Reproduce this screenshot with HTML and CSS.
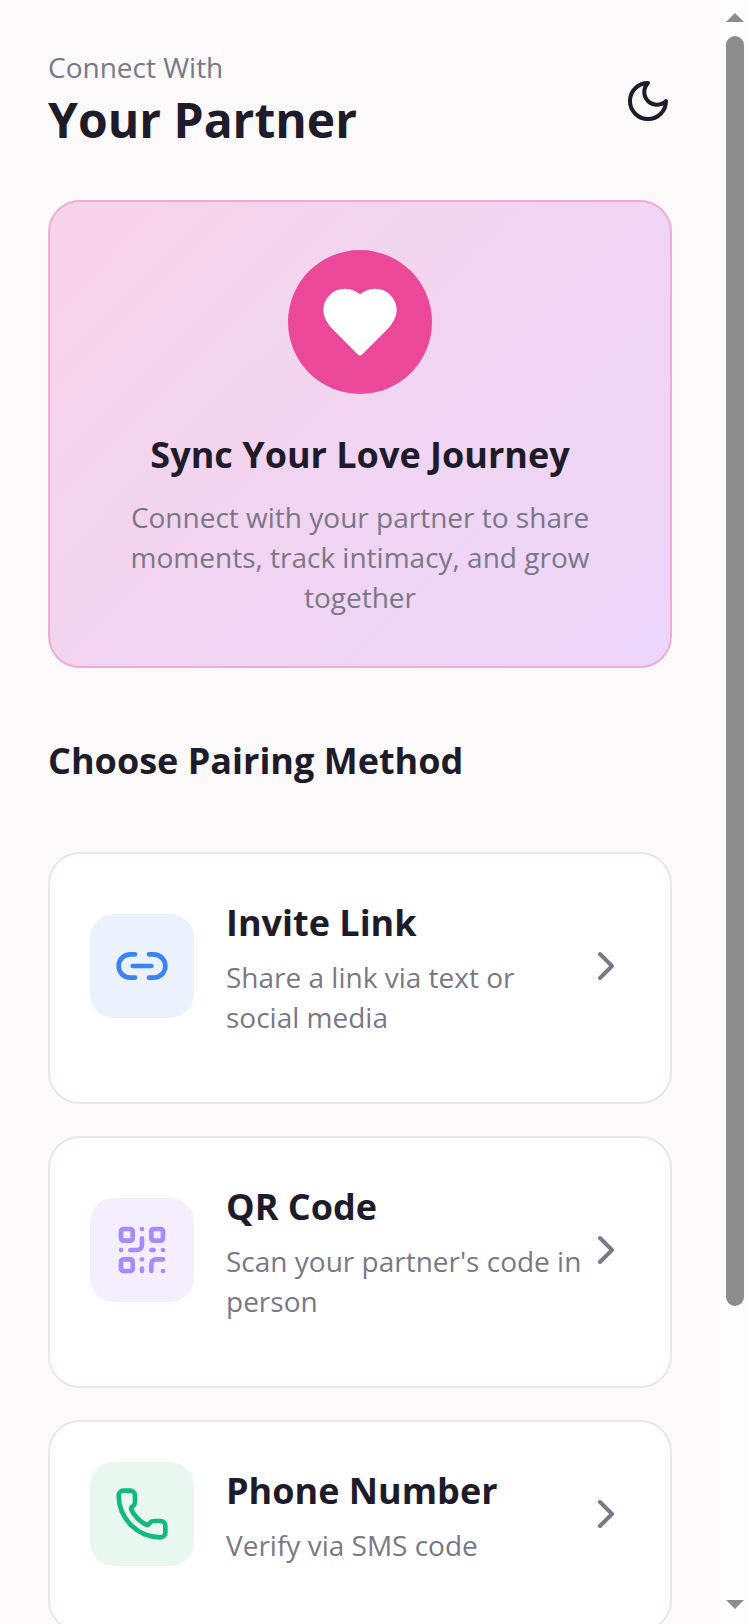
FILE: index.html
```html
<!DOCTYPE html>
<html lang="en">
<head>
<meta charset="utf-8">
<title>Connect With Your Partner</title>
<link rel="stylesheet" href="styles.css">
</head>
<body>
<div class="app">
  <main class="page">
    <header class="header">
      <div>
        <p class="eyebrow">Connect With</p>
        <h1 class="title">Your Partner</h1>
      </div>
      <svg class="icon-48 moon" viewBox="0 0 24 24"><path d="M12 3a6 6 0 0 0 9 9 9 9 0 1 1-9-9Z"/></svg>
    </header>

    <section class="hero">
      <div class="hero-circle">
        <svg class="hero-heart" viewBox="0 0 24 24"><path d="M19 14c1.49-1.46 3-3.21 3-5.5A5.5 5.5 0 0 0 16.5 3c-1.76 0-3 .5-4.5 2-1.5-1.5-2.74-2-4.5-2A5.5 5.5 0 0 0 2 8.5c0 2.3 1.5 4.05 3 5.5l7 7Z"/></svg>
      </div>
      <h2 class="hero-title">Sync Your Love Journey</h2>
      <p class="hero-text">Connect with your partner to share moments, track intimacy, and grow together</p>
    </section>

    <h2 class="section-title">Choose Pairing Method</h2>

    <div class="methods">
      <article class="method">
        <div class="method-row">
          <div class="method-icon blue">
            <svg class="icon-56" viewBox="0 0 24 24"><path d="M9 17H7A5 5 0 0 1 7 7h2"/><path d="M15 7h2a5 5 0 1 1 0 10h-2"/><line x1="8" x2="16" y1="12" y2="12"/></svg>
          </div>
          <div class="method-body">
            <h3 class="method-title">Invite Link</h3>
            <p class="method-text">Share a link via text or social media</p>
          </div>
          <svg class="icon-48 chevron" viewBox="0 0 24 24"><path d="m9 18 6-6-6-6"/></svg>
        </div>
      </article>

      <article class="method">
        <div class="method-row">
          <div class="method-icon purple">
            <svg class="icon-56" viewBox="0 0 24 24"><rect width="5" height="5" x="3" y="3" rx="1"/><rect width="5" height="5" x="16" y="3" rx="1"/><rect width="5" height="5" x="3" y="16" rx="1"/><path d="M21 16h-3a2 2 0 0 0-2 2v3"/><path d="M21 21v.01"/><path d="M12 7v3a2 2 0 0 1-2 2H7"/><path d="M3 12h.01"/><path d="M12 3h.01"/><path d="M12 16v.01"/><path d="M16 12h1"/><path d="M21 12v.01"/><path d="M12 21v-1"/></svg>
          </div>
          <div class="method-body">
            <h3 class="method-title">QR Code</h3>
            <p class="method-text">Scan your partner's code in person</p>
          </div>
          <svg class="icon-48 chevron" viewBox="0 0 24 24"><path d="m9 18 6-6-6-6"/></svg>
        </div>
      </article>

      <article class="method">
        <div class="method-row">
          <div class="method-icon green">
            <svg class="icon-56" viewBox="0 0 24 24"><path d="M13.832 16.568a1 1 0 0 0 1.213-.303l.355-.465A2 2 0 0 1 17 15h3a2 2 0 0 1 2 2v3a2 2 0 0 1-2 2A18 18 0 0 1 2 4a2 2 0 0 1 2-2h3a2 2 0 0 1 2 2v3a2 2 0 0 1-.8 1.6l-.468.351a1 1 0 0 0-.292 1.233 14 14 0 0 0 6.392 6.384"/></svg>
          </div>
          <div class="method-body">
            <h3 class="method-title">Phone Number</h3>
            <p class="method-text">Verify via SMS code</p>
          </div>
          <svg class="icon-48 chevron" viewBox="0 0 24 24"><path d="m9 18 6-6-6-6"/></svg>
        </div>
      </article>
    </div>
  </main>

  <aside class="scrollbar" aria-hidden="true">
    <span class="arrow-up"></span>
    <span class="thumb"></span>
    <span class="arrow-down"></span>
  </aside>
</div>
</body>
</html>
```
FILE: styles.css
```css
* { box-sizing: border-box; }
html, body { margin: 0; height: 100%; overflow: hidden; }
body { font-family: "Open Sans", "Noto Sans", sans-serif; color: #1e1b2a; background: #fdfdfd; }
h1, h2, h3, p { margin: 0; }

.app { display: flex; height: 1624px; overflow: hidden; }
.page { width: 720px; flex: none; height: 1624px; overflow: hidden; padding: 48px 48px 0; background: #fbf9fa; }

.header { display: flex; justify-content: space-between; align-items: center; }
.eyebrow { font-size: 28px; line-height: 38px; margin-bottom: 2px; color: #7a7786; }
.title { font-size: 48px; line-height: 64px; font-weight: 700; }

svg { fill: none; stroke: currentColor; stroke-width: 2; stroke-linecap: round; stroke-linejoin: round; flex: none; display: block; }
.icon-48 { width: 48px; height: 48px; }
.icon-56 { width: 56px; height: 56px; }
.moon { color: #1e1b2a; margin-top: 2px; }
.chevron { color: #7a7786; }

.hero { margin-top: 48px; padding: 48px 48px 49px; border: 2px solid #f0aad5; border-radius: 32px; background: linear-gradient(135deg, #f7d3e8, #ecd6fb); text-align: center; display: flex; flex-direction: column; align-items: center; }
.hero-circle { width: 144px; height: 144px; border-radius: 50%; background: #ec4899; display: flex; align-items: center; justify-content: center; }
.hero-heart { width: 80px; height: 80px; color: #fff; fill: #fff; }
.hero-title { margin-top: 32px; font-size: 36px; line-height: 58px; font-weight: 700; }
.hero-text { margin-top: 13px; font-size: 28px; line-height: 40px; color: #7a7786; }

.section-title { margin-top: 64px; font-size: 36px; line-height: 58px; font-weight: 700; }

.methods { margin-top: 62px; display: flex; flex-direction: column; gap: 32px; }
.method { padding: 40px 40px 64px; border: 2px solid #efe4ee; border-radius: 32px; background: #fff; }
.method-row { display: flex; align-items: center; }
.method-icon { width: 104px; height: 104px; flex: none; margin-right: 32px; border-radius: 24px; display: flex; align-items: center; justify-content: center; }
.blue { background: #ebf2fd; color: #3b82f6; }
.purple { background: #f4eeff; color: #a78bfa; }
.green { background: #e8f8f0; color: #10b981; }
.method-body { flex: 1; min-width: 0; padding-bottom: 1px; }
.method-title { font-size: 36px; line-height: 58px; font-weight: 700; }
.method-text { margin-top: 5px; font-size: 28px; line-height: 40px; color: #7a7786; }

.scrollbar { width: 30px; flex: none; height: 1624px; background: #fdfdfd; display: flex; flex-direction: column; align-items: center; padding-top: 13px; }
.arrow-up { width: 0; height: 0; border-left: 9px solid transparent; border-right: 9px solid transparent; border-bottom: 9px solid #8c8c8c; }
.thumb { width: 18px; height: 1270px; margin-top: 14px; border-radius: 9px; background: #8c8c8c; }
.arrow-down { width: 0; height: 0; margin-top: 294px; border-left: 9px solid transparent; border-right: 9px solid transparent; border-top: 9px solid #8c8c8c; }
```
